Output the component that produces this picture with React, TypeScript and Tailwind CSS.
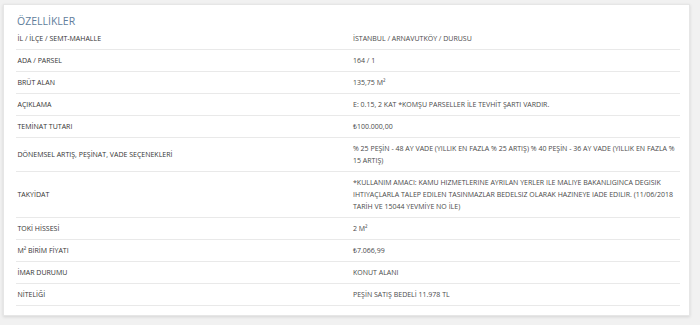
import React from "react";

const rows: { label: string; value: React.ReactNode }[] = [
  { label: "İL / İLÇE / SEMT-MAHALLE", value: "İSTANBUL / ARNAVUTKÖY / DURUSU" },
  { label: "ADA / PARSEL", value: "164 / 1" },
  { label: "BRÜT ALAN", value: "135,75 M²" },
  { label: "AÇIKLAMA", value: "E: 0.15, 2 KAT *KOMŞU PARSELLER İLE TEVHİT ŞARTI VARDIR." },
  { label: "TEMİNAT TUTARI", value: "₺100.000,00" },
  {
    label: "DÖNEMSEL ARTIŞ, PEŞİNAT, VADE SEÇENEKLERİ",
    value:
      "% 25 PEŞİN - 48 AY VADE (YILLIK EN FAZLA % 25 ARTIŞ) % 40 PEŞİN - 36 AY VADE (YILLIK EN FAZLA % 15 ARTIŞ)",
  },
  {
    label: "TAKYİDAT",
    value:
      "*KULLANIM AMACI: KAMU HIZMETLERINE AYRILAN YERLER ILE MALIYE BAKANLIGINCA DEGISIK IHTIYAÇLARLA TALEP EDILEN TASINMAZLAR BEDELSIZ OLARAK HAZINEYE IADE EDILIR. (11/06/2018 TARİH VE 15044 YEVMİYE NO İLE)",
  },
  { label: "TOKİ HİSSESİ", value: "2 M²" },
  { label: "M² BİRİM FİYATI", value: "₺7.066,99" },
  { label: "İMAR DURUMU", value: "KONUT ALANI" },
  { label: "NİTELİĞİ", value: "PEŞİN SATIŞ BEDELİ 11.978 TL" },
];

export default function App() {
  return (
    <div
      className="w-[700px] h-[325px] bg-[#f1f1f1] pt-[4px] pl-[3px] overflow-hidden"
      style={{ fontFamily: '"Open Sans", "Noto Sans", sans-serif' }}
    >
      <div className="w-[687px] h-[312px] bg-white border border-[#e6e6e6] shadow-[0_1px_3px_rgba(0,0,0,0.12)] pl-[12px] pr-[9px] pt-[9px]">
        <h2 className="text-[10.5px] leading-[14px] text-[#5f7e9c] font-normal pl-[1px]">ÖZELLİKLER</h2>
        <div className="grid grid-cols-[335px_1fr]">
          {rows.map((r, i) => (
            <React.Fragment key={i}>
              <div className="text-[7px] leading-[13px] py-[4px] pl-[1.5px] text-[#333] flex items-center border-b border-[#e9e9e9]">
                {r.label}
              </div>
              <div className="text-[7px] leading-[12px] py-[4.5px] pl-[2px] pr-[2px] text-[#4a4a4a] border-b border-[#e9e9e9]">
                {r.value}
              </div>
            </React.Fragment>
          ))}
        </div>
      </div>
    </div>
  );
}
